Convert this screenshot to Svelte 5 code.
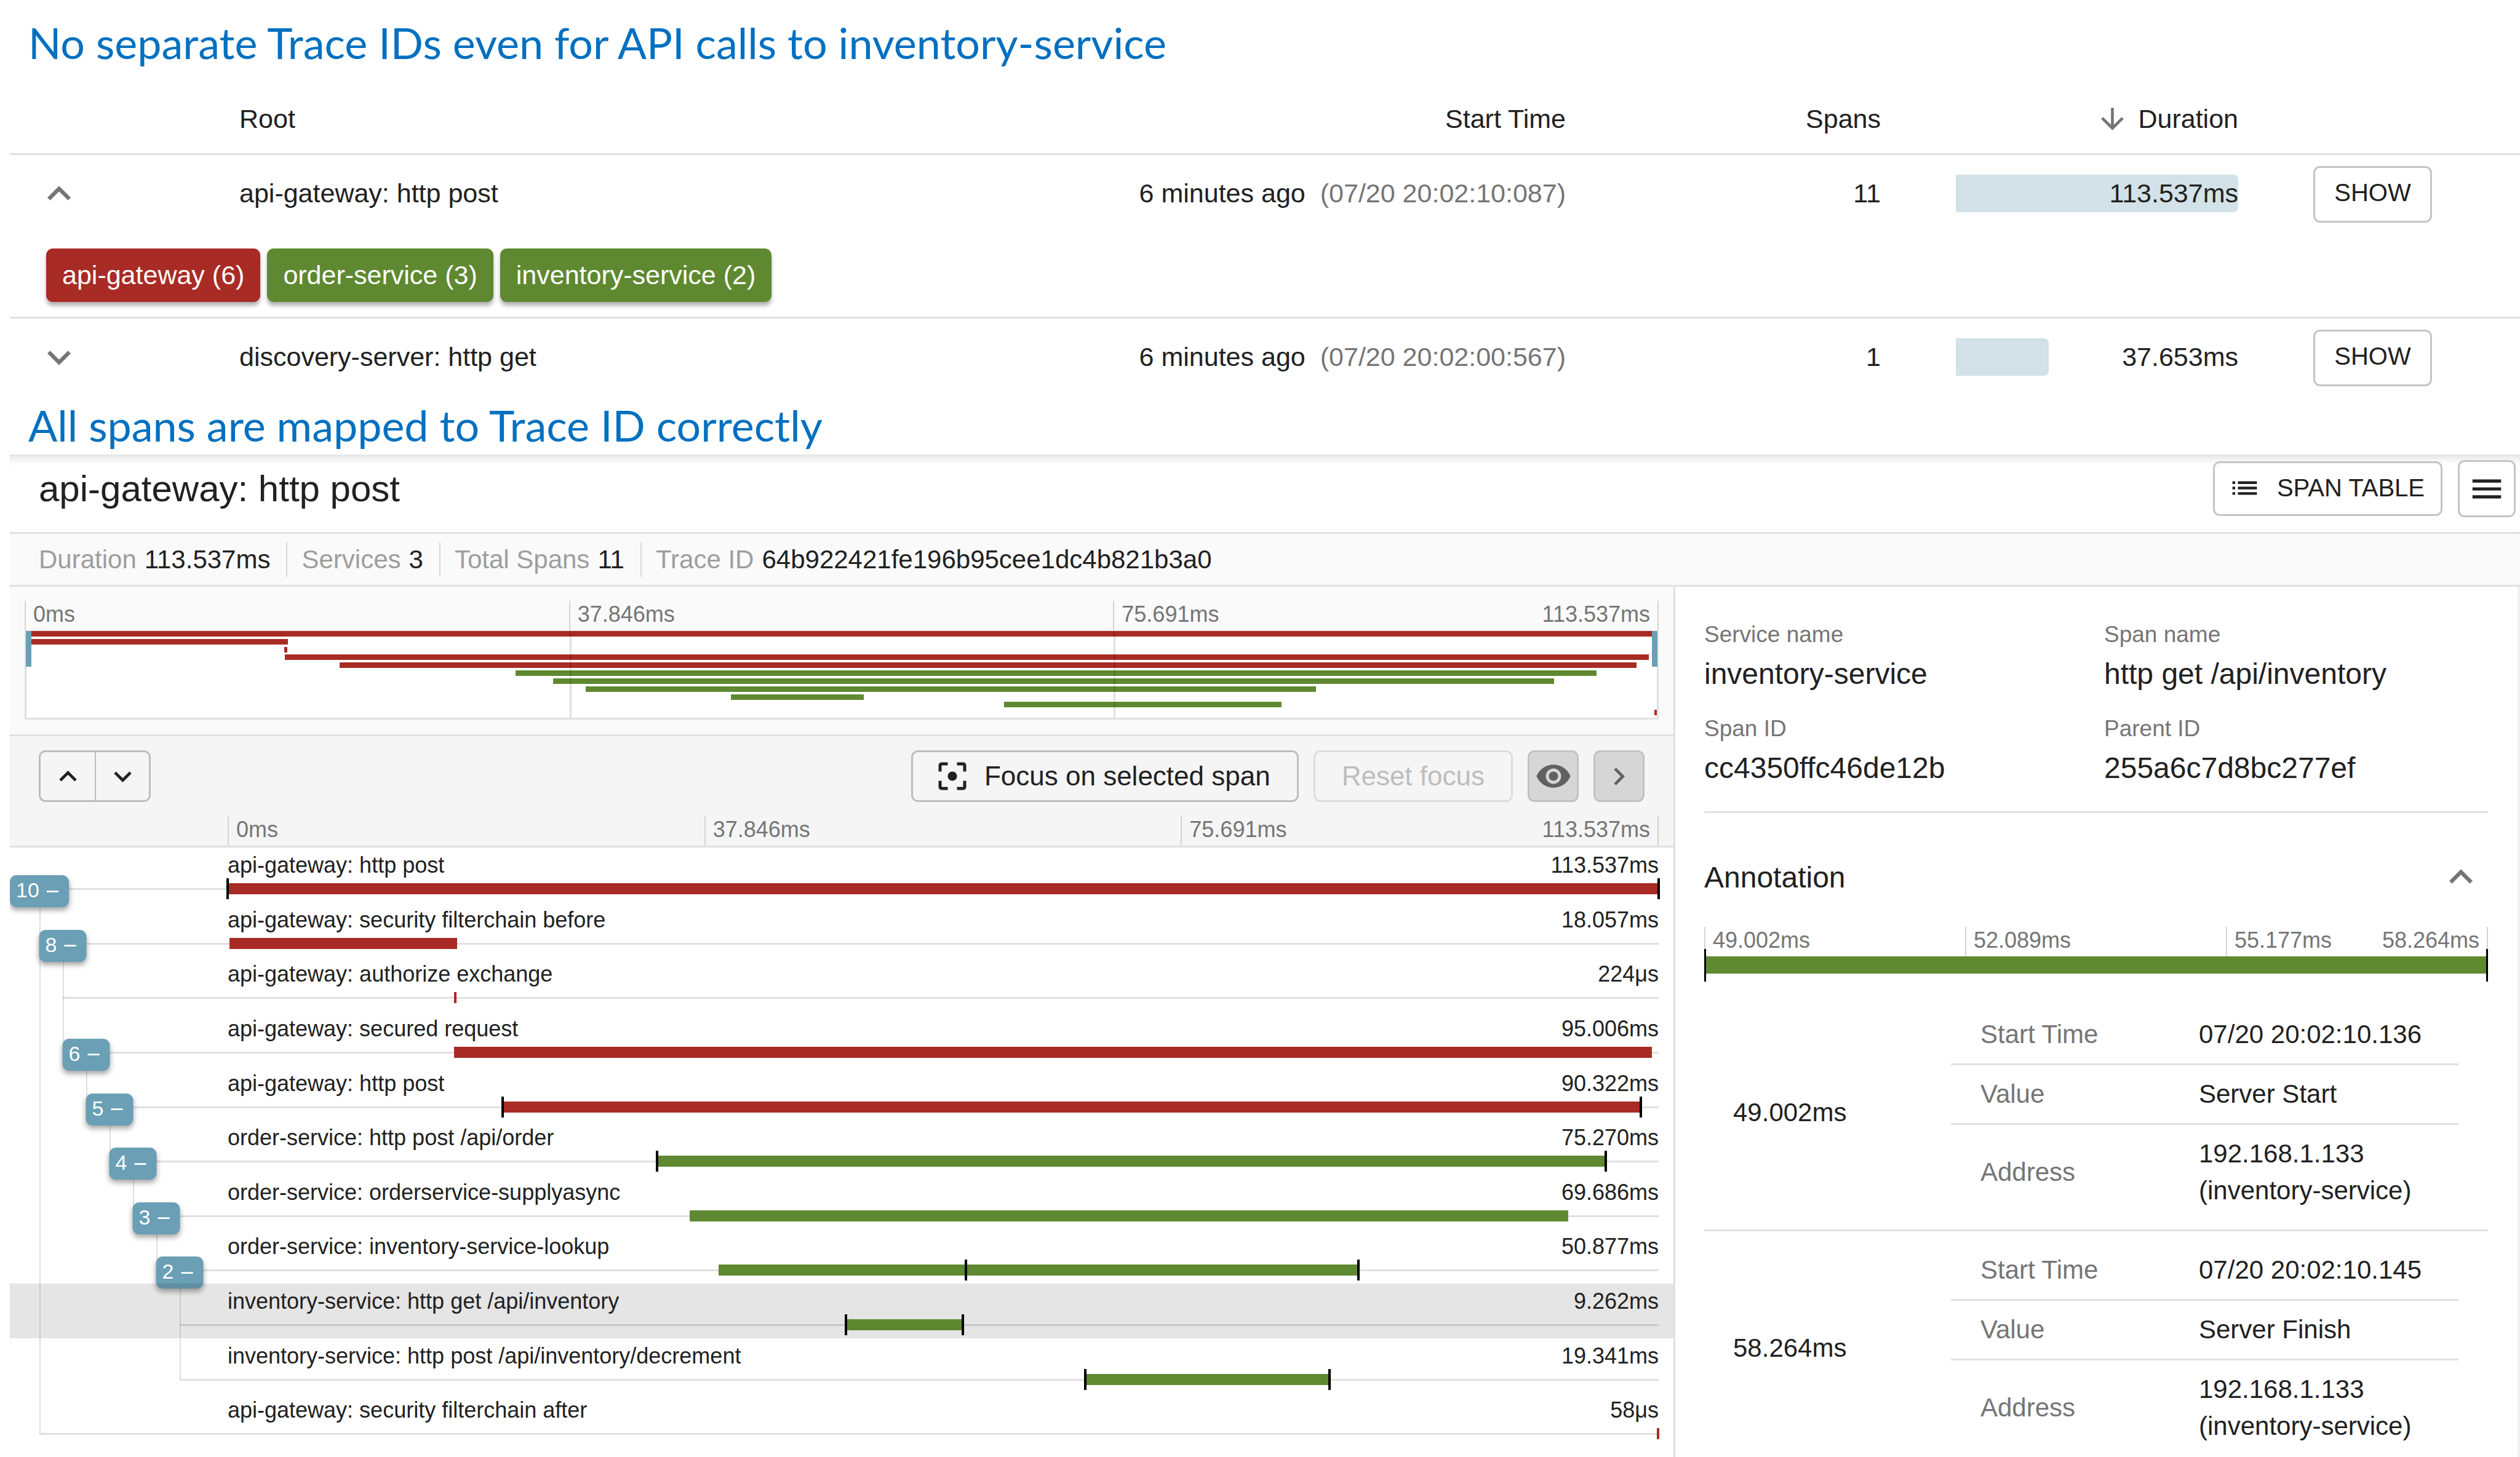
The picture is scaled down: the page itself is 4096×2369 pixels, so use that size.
<script>
  const icons = {
    up: 'M7.41 15.41 12 10.83l4.59 4.58L18 14l-6-6-6 6z',
    down: 'M7.41 8.59 12 13.17l4.59-4.58L18 10l-6 6-6-6z',
    right: 'M8.59 16.59 13.17 12 8.59 7.41 10 6l6 6-6 6z',
    arrowDown: 'M20 12l-1.41-1.41L13 16.17V4h-2v12.17l-5.58-5.59L4 12l8 8 8-8z',
    list: 'M3 13h2v-2H3v2zm0 4h2v-2H3v2zm0-8h2V7H3v2zm4 4h14v-2H7v2zm0 4h14v-2H7v2zM7 7v2h14V7H7z',
    menu: 'M3 18h18v-2H3v2zm0-5h18v-2H3v2zm0-7v2h18V6H3z',
    focus: 'M12 9c-1.66 0-3 1.34-3 3s1.34 3 3 3 3-1.34 3-3-1.34-3-3-3zm-7 6H3v4c0 1.1.9 2 2 2h4v-2H5v-4zM5 5h4V3H5c-1.1 0-2 .9-2 2v4h2V5zm14-2h-4v2h4v4h2V5c0-1.1-.9-2-2-2zm0 16h-4v2h4c1.1 0 2-.9 2-2v-4h-2v4z',
    eye: 'M12 4.5C7 4.5 2.73 7.61 1 12c1.73 4.39 6 7.5 11 7.5s9.27-3.11 11-7.5c-1.73-4.39-6-7.5-11-7.5zM12 17c-2.76 0-5-2.24-5-5s2.24-5 5-5 5 2.24 5 5-2.24 5-5 5zm0-8c-1.66 0-3 1.34-3 3s1.34 3 3 3 3-1.34 3-3-1.34-3-3-3z',
    minus: 'M19 13H5v-2h14v2z'
  };

  const traces = [
    {
      root: 'api-gateway: http post', ago: '6 minutes ago', at: '(07/20 20:02:10:087)',
      spans: 11, duration: '113.537ms', share: 100, open: true,
      services: [
        { label: 'api-gateway (6)', color: 'red' },
        { label: 'order-service (3)', color: 'green' },
        { label: 'inventory-service (2)', color: 'green' }
      ]
    },
    {
      root: 'discovery-server: http get', ago: '6 minutes ago', at: '(07/20 20:02:00:567)',
      spans: 1, duration: '37.653ms', share: 33, open: false, services: []
    }
  ];

  const facts = [
    ['Duration', '113.537ms'],
    ['Services', '3'],
    ['Total Spans', '11'],
    ['Trace ID', '64b922421fe196b95cee1dc4b821b3a0']
  ];

  // start, width and marks are percentages of the whole trace;
  // reach is the number of rows down to the last direct child
  const spans = [
    { name: 'api-gateway: http post', time: '113.537ms', color: 'red', start: 0, width: 100, marks: [0, 100], level: 0, count: 10, reach: 10 },
    { name: 'api-gateway: security filterchain before', time: '18.057ms', color: 'red', start: 0.15, width: 15.9, marks: [], level: 1, count: 8, reach: 2 },
    { name: 'api-gateway: authorize exchange', time: '224μs', color: 'red', start: 15.8, width: 0.2, marks: [], level: 1 },
    { name: 'api-gateway: secured request', time: '95.006ms', color: 'red', start: 15.84, width: 83.68, marks: [], level: 2, count: 6, reach: 1 },
    { name: 'api-gateway: http post', time: '90.322ms', color: 'red', start: 19.2, width: 79.55, marks: [19.2, 98.75], level: 3, count: 5, reach: 1 },
    { name: 'order-service: http post /api/order', time: '75.270ms', color: 'green', start: 30, width: 66.3, marks: [30, 96.3], level: 4, count: 4, reach: 1 },
    { name: 'order-service: orderservice-supplyasync', time: '69.686ms', color: 'green', start: 32.3, width: 61.38, marks: [], level: 5, count: 3, reach: 1 },
    { name: 'order-service: inventory-service-lookup', time: '50.877ms', color: 'green', start: 34.3, width: 44.81, marks: [51.6, 79], level: 6, count: 2, reach: 2 },
    { name: 'inventory-service: http get /api/inventory', time: '9.262ms', color: 'green', start: 43.2, width: 8.16, marks: [43.2, 51.36], level: 6, selected: true },
    { name: 'inventory-service: http post /api/inventory/decrement', time: '19.341ms', color: 'green', start: 59.95, width: 17.04, marks: [59.95, 77], level: 6 },
    { name: 'api-gateway: security filterchain after', time: '58μs', color: 'red', start: 99.85, width: 0.15, marks: [], level: 0 }
  ];

  const traceTicks = ['0ms', '37.846ms', '75.691ms', '113.537ms'];
  const spanTicks = ['49.002ms', '52.089ms', '55.177ms', '58.264ms'];

  const details = [
    ['Service name', 'inventory-service'],
    ['Span name', 'http get /api/inventory'],
    ['Span ID', 'cc4350ffc46de12b'],
    ['Parent ID', '255a6c7d8bc277ef']
  ];

  const annotations = [
    { at: '49.002ms', start: '07/20 20:02:10.136', value: 'Server Start' },
    { at: '58.264ms', start: '07/20 20:02:10.145', value: 'Server Finish' }
  ];
</script>

{#snippet icon(name, size)}
  <svg class="icon {size}" viewBox="0 0 24 24" aria-hidden="true"><path d={icons[name]} /></svg>
{/snippet}

{#snippet axis(ticks)}
  <div class="axis">
    <span>{ticks[0]}</span>
    <span>{ticks[1]}</span>
    <span class="last"><span>{ticks[2]}</span><span>{ticks[3]}</span></span>
  </div>
{/snippet}

<main>
  <h1>No separate Trace IDs even for API calls to inventory-service</h1>

  <table class="traces">
    <colgroup>
      <col class="c-toggle" /><col class="c-root" /><col /><col class="c-spans" /><col class="c-duration" /><col class="c-action" />
    </colgroup>
    <thead>
      <tr>
        <th></th>
        <th>Root</th>
        <th class="num">Start Time</th>
        <th class="num">Spans</th>
        <th class="num"><span class="sorted">{@render icon('arrowDown', 's55')}Duration</span></th>
        <th></th>
      </tr>
    </thead>
    <tbody>
      {#each traces as t}
        <tr class="trace" class:open={t.open}>
          <td class="toggle">
            <button class="bare" aria-label={t.open ? 'Collapse' : 'Expand'}>{@render icon(t.open ? 'up' : 'down', 's76')}</button>
          </td>
          <td>{t.root}</td>
          <td class="num">{t.ago}<span class="at">{t.at}</span></td>
          <td class="num">{t.spans}</td>
          <td class="num duration">
            <div class="meter">
              <div class="fill" style:width="{t.share}%"></div>
              <span>{t.duration}</span>
            </div>
          </td>
          <td class="action"><button class="outlined show">SHOW</button></td>
        </tr>
        {#if t.open}
          <tr class="services">
            <td colspan="6">
              <div class="chips">
                {#each t.services as s}<span class="chip {s.color}">{s.label}</span>{/each}
              </div>
            </td>
          </tr>
        {/if}
      {/each}
    </tbody>
  </table>

  <h1 class="second">All spans are mapped to Trace ID correctly</h1>

  <section class="detail">
    <header>
      <h2>api-gateway: http post</h2>
      <button class="outlined span-table">{@render icon('list', 's53')}SPAN TABLE</button>
      <button class="outlined menu" aria-label="Menu">{@render icon('menu', 's62')}</button>
    </header>

    <dl class="facts">
      {#each facts as [label, value]}
        <div><dt>{label}</dt><dd>{value}</dd></div>
      {/each}
    </dl>

    <div class="columns">
      <div class="timeline">
        <div class="overview">
          {@render axis(traceTicks)}
          <div class="map">
            {#each spans as s}
              <div class="line"><div class="bar {s.color}" style:margin-left="{s.start}%" style:width="{s.width}%"></div></div>
            {/each}
            <div class="grid"><i></i><i></i><i></i></div>
            <div class="handle left"></div>
            <div class="handle right"></div>
          </div>
        </div>

        <div class="toolbar">
          <div class="actions">
            <div class="group">
              <button aria-label="Previous">{@render icon('up', 's57')}</button>
              <button aria-label="Next">{@render icon('down', 's57')}</button>
            </div>
            <button class="outlined focus">{@render icon('focus', 's60')}Focus on selected span</button>
            <button class="outlined reset" disabled>Reset focus</button>
            <button class="outlined toggled" aria-label="Toggle overview">{@render icon('eye', 's60')}</button>
            <button class="outlined toggled" aria-label="Toggle span detail">{@render icon('right', 's57')}</button>
          </div>
          <div class="scale">{@render axis(traceTicks)}</div>
        </div>

        <div class="spans">
          {#each spans as s}
            <div class="span" class:selected={s.selected}>
              <div class="tree">
                <div class="branch" style:left="{48 + s.level * 38}px"></div>
                {#if s.count}
                  <div class="trunk" style:left="{48 + s.level * 38}px" style:height="{s.reach * 100}%"></div>
                  <button class="badge" style:left="{48 + s.level * 38}px"><span>{s.count}</span>{@render icon('minus', 's33')}</button>
                {/if}
              </div>
              <div class="track">
                <div class="label"><span>{s.name}</span><span>{s.time}</span></div>
                <div class="rail">
                  <div class="bar {s.color}" style:margin-left="{s.start}%" style:width="{s.width}%"></div>
                  {#each s.marks as m}<i class="mark" style:left="{m}%"></i>{/each}
                </div>
              </div>
            </div>
          {/each}
        </div>
      </div>

      <aside>
        <dl class="about">
          {#each details as [label, value]}
            <div><dt>{label}</dt><dd>{value}</dd></div>
          {/each}
        </dl>

        <div class="annotation-head">
          <h3>Annotation</h3>
          <button class="bare" aria-label="Collapse annotations">{@render icon('up', 's76')}</button>
        </div>

        {@render axis(spanTicks)}
        <div class="wide-bar"></div>

        {#each annotations as a}
          <div class="annotation">
            <span class="when">{a.at}</span>
            <table>
              <tbody>
                <tr><th>Start Time</th><td>{a.start}</td></tr>
                <tr><th>Value</th><td>{a.value}</td></tr>
                <tr><th>Address</th><td>192.168.1.133<br />(inventory-service)</td></tr>
              </tbody>
            </table>
          </div>
        {/each}
      </aside>
    </div>
  </section>
</main>

<style>
  :global(body) {
    background: #fff;
    overflow: hidden;
  }

  main {
    --line: #e0e0e0;
    --muted: #757575;
    display: flex;
    flex-direction: column;
    min-height: 100vh;
    padding-left: 16px;
    box-sizing: border-box;
    font-family: 'Liberation Sans', Arial, sans-serif;
    font-size: 43px;
    color: #212121;
  }

  h1 {
    margin: 0;
    padding: 24px 30px;
    font: 400 70px/90px Lato, 'Open Sans', sans-serif;
    color: #0070c0;
  }

  h1.second {
    padding: 0 30px 3px;
  }

  h2,
  h3,
  dl,
  dd {
    margin: 0;
    font-weight: 400;
  }

  button {
    display: flex;
    align-items: center;
    justify-content: center;
    box-sizing: border-box;
    margin: 0;
    padding: 0;
    border: 0;
    background: none;
    color: inherit;
    font: inherit;
    white-space: nowrap;
  }

  .outlined {
    border: 3px solid #c4c4c4;
    border-radius: 11px;
  }

  .bare {
    color: var(--muted);
  }

  .icon {
    display: block;
    flex: none;
    fill: currentColor;
    width: 57px;
    height: 57px;
  }
  .s33 { width: 33px; height: 33px; }
  .s53 { width: 53px; height: 53px; }
  .s55 { width: 55px; height: 55px; }
  .s60 { width: 60px; height: 60px; }
  .s62 { width: 62px; height: 62px; }
  .s76 { width: 76px; height: 76px; }

  .red { background: #a92b25; }
  .green { background: #5f8931; }

  /* trace list */
  .traces {
    width: 100%;
    table-layout: fixed;
    border-collapse: collapse;
  }
  .c-toggle { width: 325px; }
  .c-root { width: 1100px; }
  .c-spans { width: 512px; }
  .c-duration { width: 581px; }
  .c-action { width: 410px; }

  .traces th {
    height: 111px;
    padding: 0 48px;
    border-bottom: 3px solid var(--line);
    font-weight: 400;
    text-align: left;
  }
  .traces td {
    height: 125px;
    padding: 0 48px 3px;
    white-space: nowrap;
  }
  .traces .num {
    text-align: right;
  }
  .sorted {
    display: flex;
    align-items: center;
    justify-content: flex-end;
    gap: 14px;
  }
  .sorted .icon {
    color: var(--muted);
  }
  .traces .toggle {
    padding: 0 42px 3px;
  }
  .at {
    margin-left: 24px;
    color: var(--muted);
  }
  .traces .duration {
    padding-left: 74px;
  }
  .meter {
    display: grid;
    align-items: center;
  }
  .meter > * {
    grid-area: 1 / 1;
  }
  .fill {
    height: 61px;
    border-radius: 0 8px 8px 0;
    background: #d3e1e8;
  }
  .traces .action {
    padding: 0 0 0 74px;
  }
  .show {
    width: 193px;
    height: 92px;
    padding-bottom: 5px;
    font-size: 40px;
  }
  .traces .services td {
    padding: 24px 59px;
    height: auto;
    border-bottom: 3px solid var(--line);
  }
  .chips {
    display: flex;
    gap: 11px;
  }
  .chip {
    padding: 0 26px;
    border-radius: 11px;
    line-height: 87px;
    color: #fff;
    box-shadow: 0 6px 6px rgba(0, 0, 0, 0.3);
  }

  /* trace detail */
  .detail {
    flex: 1;
    display: flex;
    flex-direction: column;
    box-shadow: inset 0 16px 16px -12px rgba(0, 0, 0, 0.16);
  }
  header {
    display: flex;
    align-items: center;
    gap: 25px;
    padding: 9px 7px 24px 47px;
    border-bottom: 3px solid var(--line);
  }
  h2 {
    flex: 1;
    font-size: 60px;
    line-height: 90px;
  }
  .span-table {
    height: 89px;
    padding: 0 26px 3px 22px;
    gap: 26px;
    font-size: 40px;
  }
  .menu {
    width: 94px;
    height: 93px;
  }

  .facts {
    display: flex;
    align-items: center;
    height: 83px;
    padding: 0 21px;
    border-bottom: 3px solid var(--line);
    background: #fafafa;
    font-size: 42px;
    line-height: 56px;
  }
  .facts div {
    display: flex;
    gap: 13px;
    padding: 0 26px;
  }
  .facts div + div {
    border-left: 2px solid #d8d8d8;
    padding-left: 23px;
  }
  .facts dt {
    color: #9e9e9e;
  }

  .columns {
    flex: 1;
    display: grid;
    grid-template-columns: minmax(0, 2707fr) minmax(0, 1373fr);
  }
  .timeline {
    border-right: 3px solid var(--line);
    overflow: hidden;
  }

  .axis {
    display: grid;
    grid-template-columns: repeat(3, 1fr);
    height: 48px;
    border-right: 2px solid #d4d4d4;
    font-size: 36px;
    line-height: 44px;
    color: var(--muted);
  }
  .axis > span {
    padding: 0 12px;
    border-left: 2px solid #d4d4d4;
  }
  .axis .last {
    display: flex;
    justify-content: space-between;
  }

  .overview {
    padding: 23px 24px 24px;
    border-bottom: 3px solid var(--line);
    background: #fafafa;
  }
  .map {
    position: relative;
    display: grid;
    grid-auto-rows: 1fr;
    box-sizing: border-box;
    height: 145px;
    border: 3px solid var(--line);
    border-top-width: 1px;
    background: #fff;
  }
  .map .bar {
    min-width: 4px;
    height: 9px;
  }
  .grid {
    position: absolute;
    inset: 0;
    display: grid;
    grid-template-columns: repeat(3, 1fr);
  }
  .grid i + i {
    border-left: 3px solid rgba(0, 0, 0, 0.12);
  }
  .handle {
    position: absolute;
    top: 0;
    width: 9px;
    height: 58px;
    background: #6a9fb5;
  }
  .left { left: -1px; }
  .right { right: -1px; }

  .toolbar {
    padding: 23px 0 0;
    border-bottom: 3px solid var(--line);
    background: #f5f5f5;
  }
  .actions {
    display: flex;
    gap: 24px;
    padding: 0 47px;
    margin-bottom: 23px;
  }
  .actions > button {
    height: 84px;
  }
  .group {
    display: flex;
    box-sizing: border-box;
    height: 84px;
    margin-right: auto;
    border: 3px solid #bdbdbd;
    border-radius: 11px;
  }
  .group button {
    width: 88px;
  }
  .group button + button {
    border-left: 2px solid #bdbdbd;
  }
  .focus {
    padding: 0 43px 0 34px;
    gap: 22px;
    border-color: #bdbdbd;
    font-size: 44px;
  }
  .reset {
    padding: 0 43px;
    border-color: #dcdcdc;
    color: #bdbdbd;
    font-size: 44px;
  }
  .toggled {
    width: 83px;
    border-color: #c2c2c2;
    background: #d6d6d6;
    color: #616161;
  }
  .scale {
    padding: 0 24px 0 354px;
  }

  .spans {
    display: grid;
    grid-auto-rows: 1fr;
    height: 975px;
    margin-bottom: 16px;
  }
  .span {
    position: relative;
    display: grid;
    grid-template-columns: 354px minmax(0, 1fr);
    padding-right: 24px;
  }
  .selected {
    background: rgba(0, 0, 0, 0.1);
  }
  .branch {
    position: absolute;
    top: 66px;
    right: 24px;
    height: 3px;
    background: rgba(0, 0, 0, 0.12);
  }
  .trunk {
    position: absolute;
    top: 67px;
    width: 2px;
    background: rgba(0, 0, 0, 0.12);
  }
  .badge {
    position: absolute;
    top: 45px;
    gap: 5px;
    height: 52px;
    padding: 0 10px;
    border-radius: 11px;
    background: #6a9fb5;
    color: #fff;
    font-size: 34px;
    transform: translateX(-50%);
    box-shadow: 0 5px 8px rgba(0, 0, 0, 0.35);
  }
  .badge span {
    padding-bottom: 3px;
  }
  .track {
    position: relative;
    padding-top: 7px;
  }
  .label {
    display: flex;
    justify-content: space-between;
    font-size: 36px;
    line-height: 44px;
  }
  .rail {
    position: relative;
    margin-top: 7px;
  }
  .rail .bar {
    min-width: 4px;
    height: 18px;
  }
  .mark {
    position: absolute;
    top: -8px;
    width: 4px;
    height: 34px;
    margin-left: -2px;
    background: #000;
  }

  aside {
    padding: 0 48px 0 47px;
    border-right: 4px solid #f0f0f0;
  }
  .about {
    display: grid;
    grid-template-columns: 650px 1fr;
    padding: 50px 0 9px;
    border-bottom: 3px solid var(--line);
  }
  .about dt {
    font-size: 37px;
    line-height: 56px;
    color: var(--muted);
  }
  .about dd {
    font-size: 48px;
    line-height: 72px;
    padding-bottom: 25px;
  }
  .annotation-head {
    display: flex;
    align-items: center;
    justify-content: space-between;
    height: 116px;
    padding: 46px 6px 23px 0;
  }
  h3 {
    font-size: 48px;
  }
  .wide-bar {
    position: relative;
    height: 28px;
    background: #5f8931;
    margin-bottom: 36px;
  }
  .wide-bar::before,
  .wide-bar::after {
    content: '';
    position: absolute;
    top: -12px;
    bottom: -13px;
    width: 3px;
    background: #000;
  }
  .wide-bar::before { left: 0; }
  .wide-bar::after { right: 0; }

  .annotation {
    display: grid;
    grid-template-columns: 401px minmax(0, 1fr);
    align-items: center;
    padding: 16px 48px 16px 0;
    font-size: 42px;
    line-height: 60px;
  }
  .annotation + .annotation {
    border-top: 3px solid var(--line);
  }
  .when {
    padding-left: 47px;
  }
  .annotation table {
    width: 100%;
    table-layout: fixed;
    border-collapse: collapse;
  }
  .annotation th {
    width: 307px;
    padding: 17px 0 17px 48px;
    font-weight: 400;
    text-align: left;
    color: var(--muted);
  }
  .annotation td {
    padding: 17px 0 17px 48px;
  }
  .annotation tr + tr {
    border-top: 3px solid var(--line);
  }
</style>
